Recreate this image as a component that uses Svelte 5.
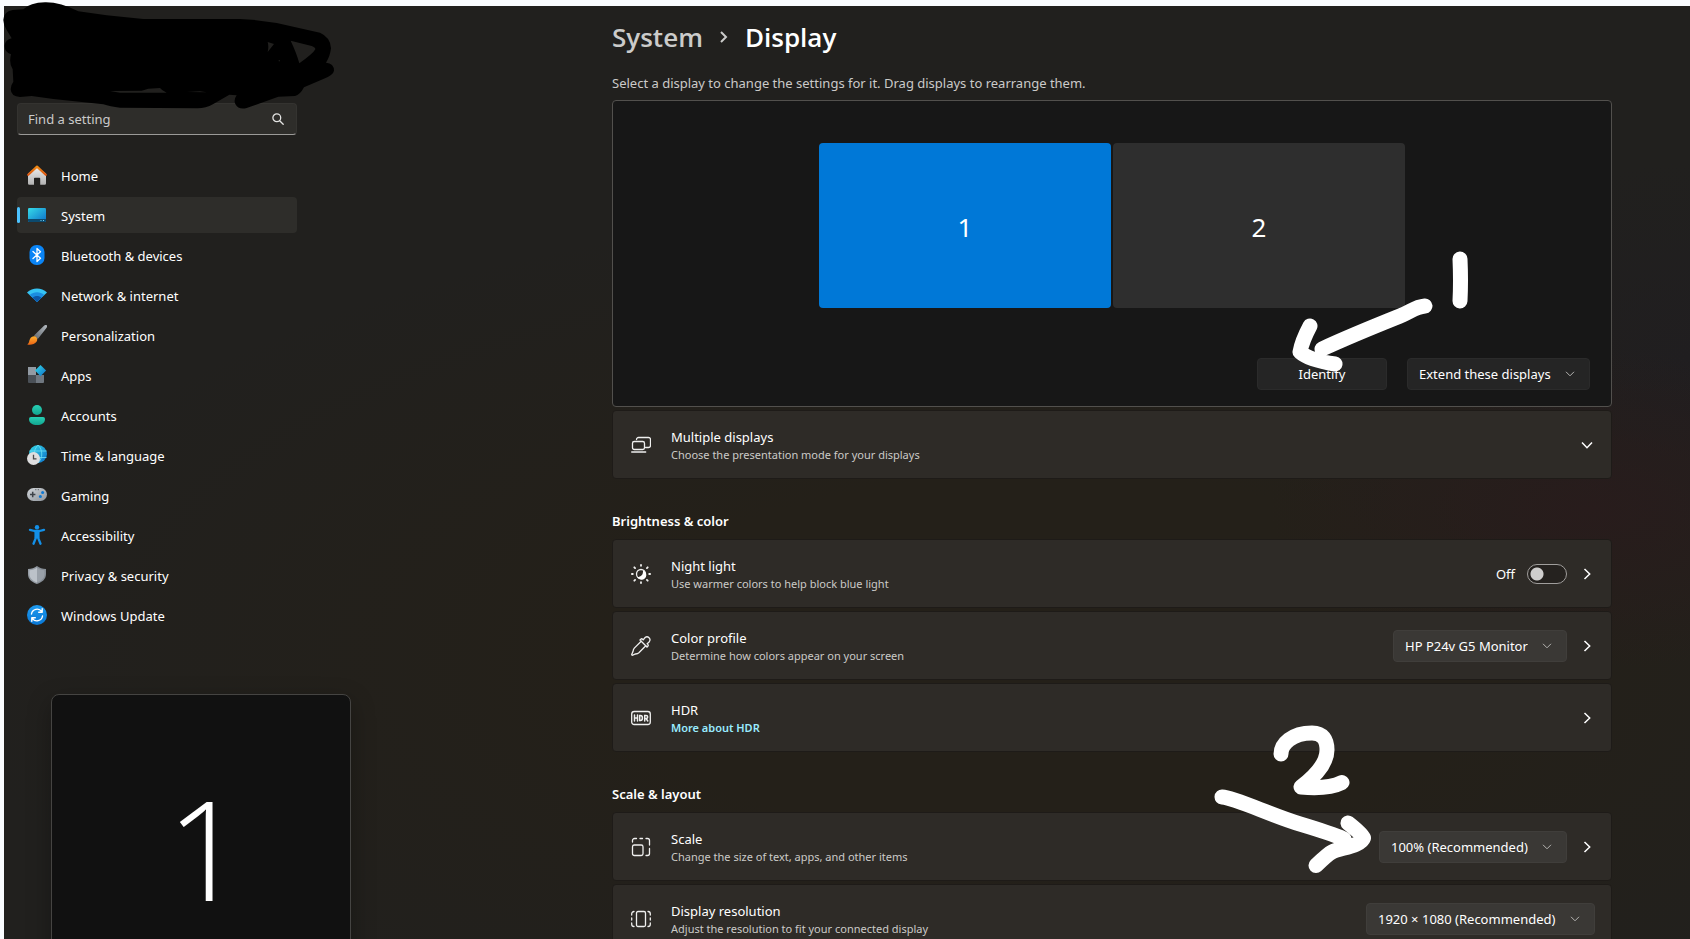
<script>
  const nav = [
    { id: 'home', label: 'Home' },
    { id: 'system', label: 'System' },
    { id: 'bluetooth', label: 'Bluetooth & devices' },
    { id: 'network', label: 'Network & internet' },
    { id: 'personalization', label: 'Personalization' },
    { id: 'apps', label: 'Apps' },
    { id: 'accounts', label: 'Accounts' },
    { id: 'time', label: 'Time & language' },
    { id: 'gaming', label: 'Gaming' },
    { id: 'accessibility', label: 'Accessibility' },
    { id: 'privacy', label: 'Privacy & security' },
    { id: 'update', label: 'Windows Update' }
  ];
  let current = $state('system');
  let query = $state('');
  let nightLight = $state(false);
  let selected = $state(1);
</script>

{#snippet chevronRight()}
  <svg class="chev" width="12" height="14" viewBox="0 0 12 14" aria-hidden="true"><path d="M3.500 2 8.700 7l-5.200 5" /></svg>
{/snippet}

{#snippet dropdown(id, label, value, kind)}
  <span class="select {kind}">
    <select {id} aria-label={label}><option>{value}</option></select>
    <svg width="10" height="6" viewBox="0 0 10 6" aria-hidden="true"><path d="M1 .8 5 4.800 9 .8" /></svg>
  </span>
{/snippet}

{#snippet navIcon(id)}
  <svg width="20" height="20" viewBox="0 0 20 20" aria-hidden="true">
    {#if id === 'home'}
      <path d="M1 8.500 10 2l9 6.500V18.500a1.300 1.300 0 0 1-1.300 1.300H13.200v-6.200a.8.8 0 0 0-.8-.8H7.800a.8.8 0 0 0-.8.8v6.200H2.300A1.300 1.300 0 0 1 1 18.500z" fill="url(#gHome)" />
      <path d="M1.200 9.800 10 1.600l8.800 8.200" fill="none" stroke="url(#gRoof)" stroke-width="2.200" stroke-linecap="round" stroke-linejoin="round" />
    {:else if id === 'system'}
      <rect x="1" y="3" width="18" height="14" rx="1.200" fill="url(#gScreen)" />
      <path d="M1 14h18v1.800a1.200 1.200 0 0 1-1.200 1.200H2.200A1.200 1.200 0 0 1 1 15.800z" fill="#0c4a6e" />
      <path d="M13.500 15.500h1M16 15.500h1" stroke="#6fd0f5" />
    {:else if id === 'bluetooth'}
      <rect x="2.500" y="0" width="15" height="20" rx="7" fill="#0a84f5" />
      <path d="m6 6.500 7.500 6.800L10 16.500v-13l3.500 3.200L6 13.500" fill="none" stroke="#fff" stroke-width="1.300" stroke-linejoin="round" stroke-linecap="round" />
    {:else if id === 'network'}
      <path d="M0 7.500C5.500 2 14.500 2 20 7.500L10 17z" fill="#35c3f3" />
      <path d="M2.700 10c4.200-3.800 10.400-3.800 14.600 0L10 17z" fill="#1b8de0" />
      <path d="M5.500 12.700c2.600-2.300 6.400-2.300 9 0L10 17z" fill="#0b57a8" />
    {:else if id === 'personalization'}
      <path d="M19.700.3c.7.700.3 1.800-.3 2.700l-8.600 11-3.800-3.500L17 .8c.8-.7 2-1.200 2.700-.5z" fill="url(#gHandle)" />
      <path d="M8.300 11.500c2 1 2.500 3.300 1.200 5.300C7.700 19.500 3.500 20.200.3 19.500c2.200-1.700 1.500-3.300 2.700-5.500 1-2 3.300-3.200 5.300-2.500z" fill="url(#gPaint)" />
    {:else if id === 'apps'}
      <rect x="1" y="2" width="8" height="8" fill="#929aa3" />
      <path d="M1 10h8v8H2a1 1 0 0 1-1-1z" fill="#4a5057" />
      <path d="M9 10h8v7a1 1 0 0 1-1 1H9z" fill="#6f7780" />
      <path d="m13.500 0 5.600 5.600-5.600 5.600L8 5.600z" fill="url(#gScreen)" />
    {:else if id === 'accounts'}
      <circle cx="10" cy="5" r="5" fill="url(#gPerson)" />
      <path d="M4 12h12a2 2 0 0 1 2 2c0 4-3.500 6-8 6s-8-2-8-6a2 2 0 0 1 2-2z" fill="url(#gPerson)" />
    {:else if id === 'time'}
      <circle cx="11" cy="9" r="9" fill="url(#gScreen)" />
      <path d="M2.500 6h17M9 12.500h10.500M11 0c-5 5-5 13 0 18M11 0c5 5 5 13 0 18" fill="none" stroke="#6fe0f5" stroke-width=".8" />
      <circle cx="6.500" cy="13.500" r="6.500" fill="#dededf" />
      <path d="M6.500 9.800v4h3" fill="none" stroke="#4a4a4c" stroke-width="1.300" />
    {:else if id === 'gaming'}
      <rect y="3" width="20" height="13" rx="6.500" fill="url(#gPad)" />
      <path d="M5.700 6.800v5.400M3 9.500h5.400" stroke="#3d4248" stroke-width="1.500" />
      <circle cx="15.600" cy="7.600" r="1.500" fill="#0c78d4" /><circle cx="13.400" cy="11.600" r="1.500" fill="#0c78d4" />
      <path d="M8.300 4.700h1M10.800 4.700h1" stroke="#4b5056" />
    {:else if id === 'accessibility'}
      <circle cx="10" cy="2.200" r="2.200" fill="#1390e8" />
      <path d="M3 4.800 7.500 6h5L17 4.800M9 6.500v6L6.500 18.700M11 6.500v6l2.500 6.200" fill="none" stroke="#1390e8" stroke-width="2.300" stroke-linecap="round" stroke-linejoin="round" />
      <path d="M7.500 6h5v7h-5z" fill="#1390e8" />
    {:else if id === 'privacy'}
      <path d="M10 1c2.500 2 5.500 3 9 3v5c0 5-3.500 8-9 10z" fill="#868d95" />
      <path d="M10 1C7.500 3 4.500 4 1 4v5c0 5 3.500 8 9 10z" fill="#969da5" />
      <path d="M10 2.800C8 4.300 5.500 5 2.500 5.200V9c0 4 2.700 6.600 7.500 8.400z" fill="#bcc2c9" />
      <path d="M10 2.800c2 1.500 4.500 2.200 7.500 2.400V9c0 4-2.700 6.600-7.500 8.400z" fill="#9aa1a9" />
    {:else}
      <circle cx="10" cy="10" r="10" fill="url(#gUpdate)" />
      <path d="M4.500 9a5.600 5.600 0 0 1 10.200-2.300M15.500 11a5.600 5.600 0 0 1-10.200 2.300M15.200 3.800v3.400h-3.500M4.800 16.200v-3.400h3.500" fill="none" stroke="#fff" stroke-width="1.400" stroke-linecap="round" stroke-linejoin="round" />
    {/if}
  </svg>
{/snippet}

<svg class="defs" width="0" height="0" aria-hidden="true">
  <defs>
    <linearGradient id="gHome" x1="0" y1="0" x2="0" y2="1"><stop stop-color="#ececec" /><stop offset="1" stop-color="#b2b2b2" /></linearGradient>
    <linearGradient id="gRoof" x1="0" y1="0" x2="0" y2="1"><stop stop-color="#f08a14" /><stop offset="1" stop-color="#dc5510" /></linearGradient>
    <linearGradient id="gScreen" x1="0" y1="0" x2="1" y2="1"><stop stop-color="#35dbe8" /><stop offset="1" stop-color="#0d6fc8" /></linearGradient>
    <linearGradient id="gHandle" x1="1" y1="0" x2="0" y2="1"><stop stop-color="#b5bbc1" /><stop offset="1" stop-color="#5f666d" /></linearGradient>
    <linearGradient id="gPaint" x1="0" y1="0" x2="0" y2="1"><stop stop-color="#ffb02e" /><stop offset="1" stop-color="#ec6414" /></linearGradient>
    <linearGradient id="gPerson" x1="0" y1="0" x2="0" y2="1"><stop stop-color="#27cfb4" /><stop offset="1" stop-color="#12a48f" /></linearGradient>
    <linearGradient id="gPad" x1="0" y1="0" x2="1" y2="1"><stop stop-color="#d0d4d8" /><stop offset="1" stop-color="#8f959c" /></linearGradient>
    <linearGradient id="gUpdate" x1="0" y1="0" x2="0" y2="1"><stop stop-color="#1e9bf0" /><stop offset="1" stop-color="#0876d4" /></linearGradient>
  </defs>
</svg>

<div class="app">
  <aside>
    <div class="search">
      <input type="text" aria-label="Find a setting" placeholder="Find a setting" bind:value={query} />
      <svg width="12" height="12" viewBox="0 0 12 12" aria-hidden="true"><circle cx="4.800" cy="4.800" r="3.900" /><path d="m7.700 7.700 3.500 3.500" /></svg>
    </div>
    <nav>
      {#each nav as item}
        <a href="#{item.id}" class:active={current === item.id} onclick={() => (current = item.id)}>
          {@render navIcon(item.id)}
          <span>{item.label}</span>
        </a>
      {/each}
    </nav>
  </aside>

  <main>
    <h1>
      <a href="#system">System</a>
      <svg width="10" height="14" viewBox="0 0 10 14" aria-hidden="true"><path d="m2 2 5 5-5 5" /></svg>
      <span>Display</span>
    </h1>
    <p class="hint">Select a display to change the settings for it. Drag displays to rearrange them.</p>

    <div class="arrange">
      <div class="monitors">
        {#each [1, 2] as n}
          <button class="monitor" class:selected={selected === n} onclick={() => (selected = n)}>{n}</button>
        {/each}
      </div>
      <div class="actions">
        <button class="identify">Identify</button>
        {@render dropdown('mode', 'Display mode', 'Extend these displays', 'dark')}
      </div>
      <svg class="note first" width="180" height="125" viewBox="1290 250 180 125" aria-hidden="true">
        <path d="M1460 259Q1461 281 1460 301M1425 306C1415 307 1412 311 1400 316 1375 326 1350 336 1322 349M1310 326Q1302 341 1300 352 1309 360 1335 364" />
      </svg>
    </div>

    <div class="card">
      <svg class="icon" width="20" height="20" viewBox="0 0 20 20" aria-hidden="true">
        <path d="M5.500 4.500a2 2 0 0 1 2-2h10a2 2 0 0 1 2 2v6a2 2 0 0 1-2 2h-3" />
        <rect x="1.500" y="6.500" width="12" height="8" rx="1.800" /><path d="M.7 17h14" />
      </svg>
      <div class="text"><h3>Multiple displays</h3><p>Choose the presentation mode for your displays</p></div>
      <button class="more" aria-label="Expand multiple displays">
        <svg class="chev" width="14" height="12" viewBox="0 0 14 12" aria-hidden="true"><path d="M2 3.500 7 8.700l5-5.200" /></svg>
      </button>
    </div>

    <h2>Brightness &amp; color</h2>
    <div class="stack">
      <div class="card">
        <svg class="icon" width="20" height="20" viewBox="0 0 20 20" aria-hidden="true">
          <circle cx="10" cy="10" r="4.500" />
          <path class="solid" d="M13.800 7.500A4.700 4.700 0 1 1 6.400 13c3.600 0 6-2.300 5.600-6.800z" />
          <path class="rays" d="M10 .9v.9M10 18.200v.9M.9 10h.9M18.200 10h.9M3.300 3.300l.8.800M15.900 15.900l.8.800M16.700 3.300l-.8.800M4.100 15.900l-.8.800" />
        </svg>
        <div class="text"><h3>Night light</h3><p>Use warmer colors to help block blue light</p></div>
        <label class="toggle">
          <span>{nightLight ? 'On' : 'Off'}</span>
          <input type="checkbox" role="switch" aria-label="Night light" bind:checked={nightLight} />
        </label>
        <button class="more" aria-label="Open night light">{@render chevronRight()}</button>
      </div>
      <div class="card">
        <svg class="icon" width="20" height="20" viewBox="0 0 20 20" aria-hidden="true">
          <path d="M10.200 5.200 3.300 12.100Q2.300 13.300 2 15.500L.8 18.200q-.3 1.300 1 1l2.700-1.200q2.200-.3 3.400-1.300l6.900-6.900" />
          <path d="m9 4 7 7 .8-.8a1.300 1.300 0 0 0 0-1.800l-.6-.6 2.100-2.100a3 3 0 0 0-4.200-4.200L12.200 3.800l-.6-.6a1.300 1.300 0 0 0-1.800 0z" />
        </svg>
        <div class="text"><h3>Color profile</h3><p>Determine how colors appear on your screen</p></div>
        {@render dropdown('profile', 'Color profile', 'HP P24v G5 Monitor', '')}
        <button class="more" aria-label="Open color profile">{@render chevronRight()}</button>
      </div>
      <div class="card">
        <svg class="icon" width="20" height="20" viewBox="0 0 20 20" aria-hidden="true">
          <rect x=".7" y="3.500" width="18.600" height="13" rx="2.500" />
          <path class="bold" d="M3.500 7v6M6.500 7v6M3.500 10h3M8.700 7.500v5h.8q1.900 0 1.900-2.500T9.500 7.500zM13.700 13V7.600h1.300q1.700 0 1.700 1.500t-1.700 1.500h-1.300M15.200 10.700l1.600 2.300" />
        </svg>
        <div class="text"><h3>HDR</h3><a href="#hdr">More about HDR</a></div>
        <button class="more" aria-label="Open HDR">{@render chevronRight()}</button>
      </div>
    </div>

    <h2>Scale &amp; layout</h2>
    <div class="stack">
      <div class="card">
        <svg class="icon" width="20" height="20" viewBox="0 0 20 20" aria-hidden="true">
          <rect x="1.500" y="8" width="10.500" height="10.500" rx="1.800" />
          <path d="M1.500 5V3.500a2 2 0 0 1 2-2H5.500M9 1.500h2.500M15 1.500h1.500a2 2 0 0 1 2 2V8M18.500 11.500v5a2 2 0 0 1-2 2H15" />
        </svg>
        <div class="text"><h3>Scale</h3><p>Change the size of text, apps, and other items</p></div>
        {@render dropdown('scale', 'Scale', '100% (Recommended)', '')}
        <button class="more" aria-label="Open scale">{@render chevronRight()}</button>
        <svg class="note second" width="165" height="160" viewBox="1210 720 165 160" aria-hidden="true">
          <path d="M1281 754C1281 744 1292 733 1312 733 1323 733 1327 740 1327 750 1327 762 1318 774 1301 787C1322 789 1333 787 1342 782.500M1222 797C1236 798 1270 815 1300 824 1320 830 1335 835 1344 839M1348 823Q1362 834 1363.500 838C1361 846 1340 848 1332 852Q1328 854 1316 865.500" />
        </svg>
      </div>
      <div class="card">
        <svg class="icon" width="20" height="20" viewBox="0 0 20 20" aria-hidden="true">
          <rect x="5.500" y="2.500" width="9" height="15" rx="1.500" />
          <path d="M3 2.500a2.300 2.300 0 0 0-2.300 2.300V6M.7 9v2M.7 14v1.200A2.300 2.300 0 0 0 3 17.500M17 2.500a2.300 2.300 0 0 1 2.300 2.300V6M19.300 9v2M19.300 14v1.200a2.300 2.300 0 0 1-2.300 2.300" />
        </svg>
        <div class="text"><h3>Display resolution</h3><p>Adjust the resolution to fit your connected display</p></div>
        {@render dropdown('resolution', 'Display resolution', '1920 × 1080 (Recommended)', '')}
      </div>
    </div>
  </main>

  <div class="badge">1</div>
</div>

<svg class="scribble" width="360" height="150" viewBox="0 0 1080 450" aria-hidden="true">
  <path fill-rule="evenodd" d="M10 60Q10 35 38 30L70 28Q90 8 135 7 180 6 235 34L320 46 430 57H720Q800 60 880 80L960 98Q992 112 993 145 990 170 978 188 1002 190 1002 212 1000 225 970 237L912 262Q900 285 885 288L835 290 740 324Q715 330 706 312 700 300 710 286L688 284 640 312Q615 326 590 325L360 323Q330 320 310 313L160 297 95 288 60 291Q33 290 32 268 32 255 40 245L38 208Q26 190 33 163 12 155 14 135 16 120 35 115L20 90Q10 75 10 60ZM803 126 822 132 803 156Q807 140 803 126ZM872 122 935 138Q946 142 946 148 940 160 898 190 890 160 872 122ZM330 273 425 272 445 266 480 264Q486 272 500 278L360 278ZM560 276 600 274 620 277ZM836 181h4v3h-4z" />
</svg>

<style>
  :global(body) {
    margin: 0;
    background: #fafcff;
  }
  :global(*) {
    box-sizing: border-box;
  }
  .defs {
    position: absolute;
  }
  .app {
    --line: #1e1b18;
    position: relative;
    display: flex;
    height: calc(100vh - 6px);
    margin: 6px 0 0 4px;
    overflow: hidden;
    color: #fff;
    font: 13px/20px 'Noto Sans', 'Open Sans', sans-serif;
    background:
      radial-gradient(ellipse 320px 160px at 94% 54%, #281c1c, transparent),
      radial-gradient(ellipse 240px 200px at 100% 38%, #201e20, transparent),
      radial-gradient(ellipse 1100px 460px at 62% 70%, #242019 40%, transparent),
      #21201e;
  }
  button,
  input,
  select {
    margin: 0;
    color: inherit;
    font: inherit;
  }
  a {
    color: inherit;
    text-decoration: none;
  }
  h1, h2, h3, p {
    margin: 0;
  }

  aside {
    flex: none;
    width: 293px;
    padding: 97px 0 0 13px;
  }
  .search {
    position: relative;
    height: 32px;
  }
  .search input {
    width: 100%;
    height: 32px;
    padding: 0 36px 0 10px;
    border: 1px solid #343330;
    border-bottom-color: #9b9a98;
    border-radius: 4px;
    outline: 0;
    background: #2e2d2a;
  }
  .search input::placeholder {
    color: #cbcac9;
    opacity: 1;
  }
  .search svg {
    position: absolute;
    top: 10px;
    right: 13px;
    fill: none;
    stroke: #e4e4e3;
    stroke-width: 1.3;
    stroke-linecap: round;
  }
  nav {
    display: flex;
    flex-direction: column;
    gap: 4px;
    margin-top: 22px;
  }
  nav a {
    position: relative;
    display: flex;
    align-items: center;
    gap: 14px;
    height: 36px;
    padding-left: 10px;
    border-radius: 4px;
  }
  nav a span {
    padding-top: 2px;
  }
  nav a.active {
    background: #2e2d2a;
  }
  nav a.active::before {
    content: '';
    position: absolute;
    left: 0;
    width: 3px;
    height: 16px;
    border-radius: 2px;
    background: #4cc2ff;
  }

  main {
    flex: 1;
    min-width: 0;
    padding: 11px 78px 0 315px;
  }
  h1 {
    display: flex;
    align-items: center;
    gap: 16px;
    font-family: 'Open Sans', 'Noto Sans', sans-serif;
    font-size: 26px;
    font-weight: 600;
    line-height: 40px;
  }
  h1 a {
    color: #cbcbca;
  }
  h1 svg {
    fill: none;
    stroke: #cbcbca;
    stroke-width: 2;
  }
  .hint {
    margin-top: 16px;
    color: #cbcac9;
  }
  .arrange {
    position: relative;
    z-index: 1;
    margin: 7px 0 3px;
    padding: 42px 21px 16px;
    border: 1px solid #52504d;
    border-radius: 4px;
    background: #171717;
  }
  .monitors {
    display: flex;
    justify-content: center;
    gap: 2px;
    margin-bottom: 50px;
  }
  .monitor {
    width: 292px;
    height: 165px;
    padding: 3px 0 0;
    border: 0;
    border-radius: 4px;
    background: #2e2e2e;
    font-size: 26px;
  }
  .monitor.selected {
    background: #0078d7;
  }
  .actions {
    display: flex;
    justify-content: flex-end;
    gap: 20px;
  }
  .identify {
    width: 130px;
    height: 32px;
    border: 1px solid #2b2b2b;
    border-radius: 4px;
    background: #252525;
  }
  .select {
    position: relative;
    display: block;
  }
  .select select {
    display: block;
    height: 32px;
    padding: 0 38px 0 11px;
    border: 1px solid #403e3b;
    border-radius: 4px;
    appearance: none;
    background: #3a3835;
  }
  .select.dark select {
    border-color: #2b2b2b;
    background: #252525;
  }
  .select svg {
    position: absolute;
    top: 13px;
    right: 15px;
    fill: none;
    stroke: #b5b4b2;
    pointer-events: none;
  }

  h2 {
    margin: 32px 0 8px;
    font-size: 13px;
    font-weight: 600;
    line-height: 20px;
  }
  .stack {
    display: flex;
    flex-direction: column;
    gap: 3px;
  }
  .card {
    position: relative;
    display: flex;
    align-items: center;
    min-height: 69px;
    padding: 0 16px 0 18px;
    border: 1px solid var(--line);
    border-radius: 4px;
    background: #2e2b27;
  }
  .icon {
    flex: none;
    margin-right: 20px;
    fill: none;
    stroke: #f0f0ef;
    stroke-width: 1.3;
    stroke-linecap: round;
  }
  .icon .solid {
    fill: #fff;
    stroke: none;
  }
  .icon .rays {
    stroke-width: 1.8;
  }
  .icon .bold {
    stroke-width: 1.5;
  }
  .text {
    flex: 1;
    padding-top: 2px;
  }
  h3 {
    font-size: 13px;
    font-weight: 400;
    line-height: 18px;
  }
  .text p,
  .text a {
    display: block;
    color: #cbcac8;
    font-size: 11px;
    line-height: 18px;
  }
  .text a {
    color: #99ebff;
    font-weight: 600;
  }
  .more {
    display: grid;
    place-items: center;
    width: 16px;
    height: 32px;
    margin-left: 12px;
    padding: 0;
    border: 0;
    background: none;
  }
  .chev {
    fill: none;
    stroke: #fff;
    stroke-width: 1.5;
  }
  .toggle {
    display: flex;
    align-items: center;
    gap: 12px;
  }
  .toggle input {
    width: 40px;
    height: 20px;
    border: 1px solid #a09e9c;
    border-radius: 10px;
    appearance: none;
    background: radial-gradient(circle at 9px 9px, #cfcecd 6px, transparent 7px) #25221f;
  }
  .toggle input:checked {
    background: radial-gradient(circle at 29px 9px, #000 6px, transparent 7px) #4cc2ff;
  }

  .badge {
    position: absolute;
    top: 688px;
    left: 47px;
    width: 300px;
    height: 300px;
    padding: 72px 0 0 10px;
    border: 1px solid #454442;
    border-radius: 8px;
    background: #111;
    box-shadow: 0 8px 24px rgb(0 0 0 / 30%);
    font-family: 'Open Sans', 'Noto Sans', sans-serif;
    font-size: 138px;
    font-weight: 300;
    line-height: 160px;
    text-align: center;
  }
  .note {
    position: absolute;
    z-index: 2;
    fill: none;
    stroke: #fff;
    stroke-width: 15;
    stroke-linecap: round;
    stroke-linejoin: round;
    pointer-events: none;
  }
  .note.first {
    top: 149px;
    right: 141px;
  }
  .note.second {
    top: -93px;
    right: 236px;
  }
  .scribble {
    position: absolute;
    top: 0;
    left: 0;
    pointer-events: none;
  }
</style>
